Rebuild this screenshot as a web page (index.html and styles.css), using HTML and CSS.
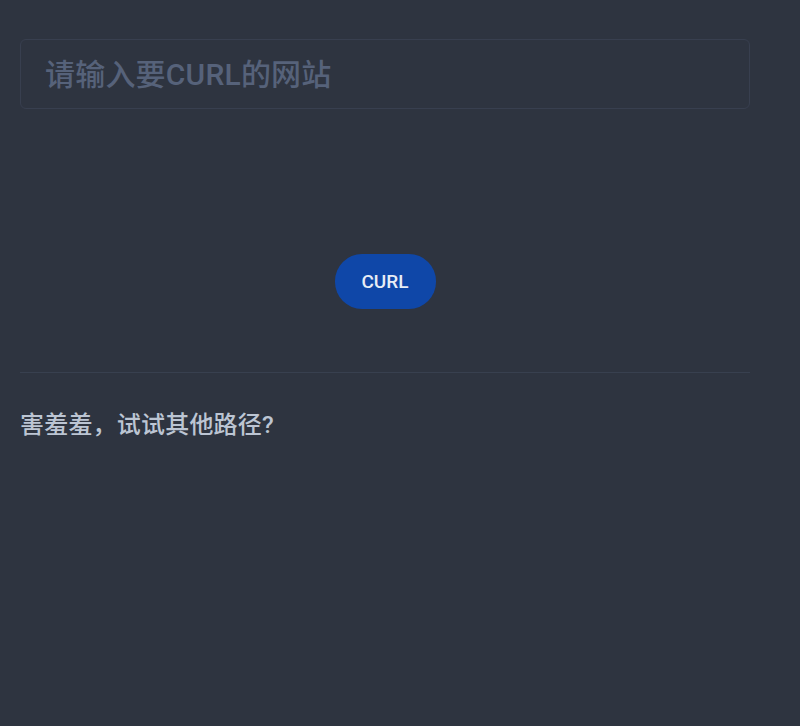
FILE: index.html
```html
<!DOCTYPE html>
<html lang="zh-CN">
<head>
<meta charset="utf-8">
<title>CURL</title>
<link rel="stylesheet" href="styles.css">
</head>
<body>
<main class="page">
  <input class="url-input" type="text" placeholder="请输入要CURL的网站">
  <div class="actions">
    <button class="curl-btn" type="button">CURL</button>
  </div>
  <hr class="divider">
  <p class="result">害羞羞，试试其他路径?</p>
</main>
</body>
</html>
```
FILE: styles.css
```css
html, body {
  margin: 0;
  padding: 0;
  background: #2e3440;
  height: 100%;
}
body {
  font-family: Roboto, "Noto Sans CJK SC", sans-serif;
}
.page {
  width: 730px;
  padding: 39px 20px 0 20px;
  display: flex;
  flex-direction: column;
}
.url-input {
  box-sizing: border-box;
  height: 70px;
  width: 100%;
  margin: 0;
  padding: 0 24px;
  background: #2e3440;
  border: 1px solid #383f4f;
  border-radius: 6px;
  font-family: Roboto, "Noto Sans CJK SC", sans-serif;
  font-size: 30px;
  font-weight: 500;
  letter-spacing: 0.2px;
  color: #d8dee9;
  outline: none;
}
.url-input::placeholder {
  color: #56627a;
  opacity: 1;
}
.actions {
  display: flex;
  justify-content: center;
  margin-top: 145px;
}
.curl-btn {
  width: 101px;
  height: 55px;
  border: none;
  border-radius: 27px;
  background: #0f47a8;
  color: #e8edf5;
  font-family: Roboto, sans-serif;
  font-weight: 500;
  font-size: 19px;
  padding: 0;
}
.divider {
  margin: 63px 0 0 0;
  border: none;
  border-top: 1px solid #38404f;
  height: 0;
}
.result {
  margin: 36px 0 0 0;
  font-size: 24px;
  font-weight: 500;
  line-height: 32px;
  letter-spacing: 0.2px;
  color: #bcc5d3;
  font-family: Roboto, "Noto Sans CJK SC", sans-serif;
}
```
